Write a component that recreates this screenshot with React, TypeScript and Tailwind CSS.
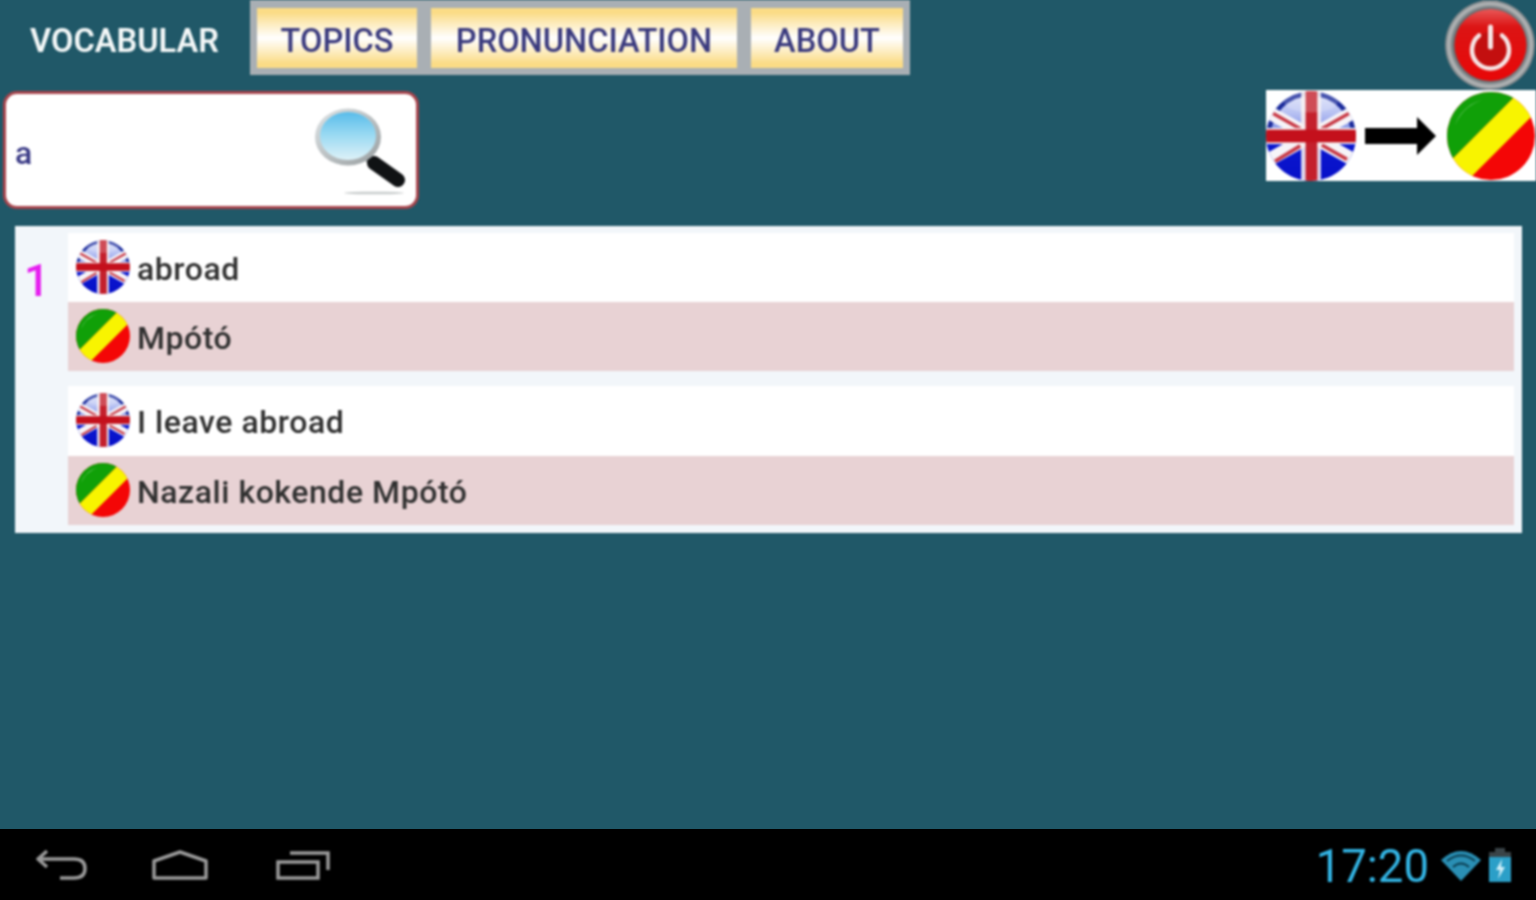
import React from "react";

function UkFlag({ size, id }: { size: number; id: string }) {
  return (
    <svg width={size} height={size} viewBox="0 0 100 100" className="block shrink-0">
      <defs>
        <clipPath id={id + "c"}>
          <circle cx="50" cy="50" r="50" />
        </clipPath>
        <linearGradient id={id + "b"} x1="0" y1="0" x2="0" y2="1">
          <stop offset="0" stopColor="#dfe4fa" />
          <stop offset="0.25" stopColor="#b6c0f2" />
          <stop offset="0.45" stopColor="#7f90e6" />
          <stop offset="0.53" stopColor="#0a18d0" />
          <stop offset="1" stopColor="#0810c8" />
        </linearGradient>
      </defs>
      <g clipPath={`url(#${id}c)`}>
        <rect width="100" height="100" fill={`url(#${id}b)`} />
        <circle cx="50" cy="50" r="47" fill="none" stroke="#1a2a9a" strokeWidth="5" strokeDasharray="148 148" strokeDashoffset="-148" />
        <path d="M0 22 L100 78 M100 22 L0 78" stroke="#f6f4f8" strokeWidth="15" />
        <path d="M8 25 L38 42 M92 25 L62 42 M10 78 L38 61 M90 76 L62 60" stroke="#c83844" strokeWidth="4" />
        <rect x="39" width="22" height="100" fill="#f6eef0" opacity="0.9" />
        <rect y="41" width="100" height="18" fill="#f6eef0" />
        <rect x="44" width="13" height="100" fill="#c4202c" />
        <rect y="43" width="100" height="14" fill="#c4101c" />
        <ellipse cx="50" cy="12" rx="30" ry="12" fill="#ffffff" opacity="0.2" />
      </g>
    </svg>
  );
}

function CongoFlag({ size, id }: { size: number; id: string }) {
  return (
    <svg width={size} height={size} viewBox="0 0 100 100" className="block shrink-0">
      <defs>
        <clipPath id={id + "c"}>
          <circle cx="50" cy="50" r="50" />
        </clipPath>
      </defs>
      <g clipPath={`url(#${id}c)`}>
        <rect width="100" height="100" fill="#f40606" />
        <path d="M0 0 H82 L0 82 Z" fill="#10a008" />
        <path d="M82 0 H100 V24 L24 100 H0 V82 Z" fill="#f8f400" />
        <path d="M9 38 A44 44 0 0 1 40 9 A50 50 0 0 0 9 38 Z" fill="#ffffff" opacity="0.55" />
      </g>
    </svg>
  );
}

function PowerButton() {
  return (
    <svg width="92" height="92" viewBox="0 0 92 92" className="block">
      <defs>
        <radialGradient id="ring" cx="0.5" cy="0.5" r="0.5">
          <stop offset="0.8" stopColor="#5f686c" />
          <stop offset="0.92" stopColor="#b8babb" />
          <stop offset="1" stopColor="#70797d" />
        </radialGradient>
        <linearGradient id="red" x1="0" y1="0" x2="0" y2="1">
          <stop offset="0" stopColor="#e85858" />
          <stop offset="0.25" stopColor="#dc1414" />
          <stop offset="1" stopColor="#e80808" />
        </linearGradient>
      </defs>
      <rect x="38" y="0" width="5" height="4" fill="#8a8f92" />
      <rect x="49" y="0" width="5" height="4" fill="#8a8f92" />
      <circle cx="46" cy="45" r="45" fill="url(#ring)" />
      <circle cx="46.5" cy="45" r="36" fill="url(#red)" />
      <circle cx="46.5" cy="50" r="18" fill="#b81010" opacity="0.75" />
      <path d="M35 35.5 A18.5 18.5 0 1 0 58 35.5" fill="none" stroke="#f6e4e4" strokeWidth="4.5" strokeLinecap="round" />
      <path d="M46.5 27 V47" stroke="#f6e4e4" strokeWidth="5" strokeLinecap="round" />
    </svg>
  );
}

function Magnifier() {
  return (
    <svg width="96" height="100" viewBox="0 0 96 100" className="block">
      <defs>
        <linearGradient id="lens" x1="0" y1="0" x2="0" y2="1">
          <stop offset="0" stopColor="#58bcea" />
          <stop offset="0.45" stopColor="#96d8f2" />
          <stop offset="1" stopColor="#def2f8" />
        </linearGradient>
        <linearGradient id="rim" x1="0" y1="0" x2="1" y2="1">
          <stop offset="0" stopColor="#dfe4e6" />
          <stop offset="1" stopColor="#989ea0" />
        </linearGradient>
      </defs>
      <ellipse cx="64" cy="93" rx="30" ry="1.3" fill="#c8cccc" />
      <path d="M54 56 L64 64" stroke="#8a8f92" strokeWidth="6" />
      <path d="M64 63 L88 80" stroke="#101214" strokeWidth="14" strokeLinecap="round" />
      <ellipse cx="38" cy="37" rx="33" ry="28.5" fill="url(#rim)" />
      <ellipse cx="38" cy="36" rx="28" ry="24" fill="url(#lens)" />
    </svg>
  );
}

function Row({ kind, text, id, h }: { kind: "en" | "ln"; text: string; id: string; h: string }) {
  const pink = kind === "ln";
  return (
    <div className={`flex items-center pl-2 ${h} ${pink ? "bg-[#e8d2d4]" : "bg-white"}`}>
      <div className="mb-[2px]">
        {pink ? <CongoFlag size={54} id={id} /> : <UkFlag size={54} id={id} />}
      </div>
      <span className="ml-[7px] mt-[2px] text-[32px] font-medium leading-none tracking-[0.55px] text-[#303030]">{text}</span>
    </div>
  );
}

export default function App() {
  const tabs = [
    { t: "TOPICS", w: "w-[160px]" },
    { t: "PRONUNCIATION", w: "w-[306px]" },
    { t: "ABOUT", w: "w-[152px]" },
  ];
  return (
    <div className="flex h-[900px] w-[1536px] flex-col overflow-hidden bg-[#205868] font-['Roboto',sans-serif]">
      <main className="flex-1 blur-[0.8px]">
        <div className="flex justify-between">
          <div>
            <div className="flex">
              <div className="flex h-[75px] w-[250px] items-center pl-[30px] pt-[7px] text-[32.6px] font-semibold text-[#f4f8f8]">VOCABULAR</div>
              <div className="flex h-[75px] gap-[14px] bg-[#a9afb4] px-[7px] pb-[7px] pt-[8px]">
                {tabs.map((x) => (
                  <div
                    key={x.t}
                    className={`flex items-center justify-center bg-gradient-to-b from-[#fbdc86] from-[8%] via-white to-[#fbdc86] to-[92%] pt-[7px] text-[32.6px] font-medium text-[#3a3a7e] ${x.w}`}
                  >
                    {x.t}
                  </div>
                ))}
              </div>
            </div>
            <div className="ml-[3px] mt-[16px] flex h-[118px] w-[416px] items-center justify-between rounded-[14px] border-[3px] border-[#a8444c] bg-white pl-[9px] pr-[10px]">
              <span className="mt-[6px] text-[32px] font-medium leading-none text-[#3a3a86]">a</span>
              <Magnifier />
            </div>
          </div>
          <div className="flex flex-col items-end">
            <div className="h-[90px]">
              <PowerButton />
            </div>
            <div className="flex h-[91px] w-[270px] items-center bg-white">
              <UkFlag size={90} id="bigUk" />
              <svg width="72" height="40" viewBox="0 0 72 40" className="ml-[9px] mr-[10px] block shrink-0">
                <path d="M0 12 H52 V1 L71 20 L52 39 V28 H0 Z" fill="#000000" />
              </svg>
              <CongoFlag size={88} id="bigCg" />
            </div>
          </div>
        </div>
        <div className="ml-[15px] mt-[17px] flex h-[307px] w-[1507px] bg-[#f2f6fa] pb-[8px] pr-[8px] pt-[7px]">
          <div className="h-full w-[53px] pl-[9px] pt-[25px] text-[45px] font-medium leading-none text-[#e61ef0]">1</div>
          <div className="flex flex-1 flex-col">
            <Row kind="en" text="abroad" id="a" h="h-[69px]" />
            <Row kind="ln" text="Mpótó" id="b" h="h-[69px]" />
            <div className="mt-[15px]">
              <Row kind="en" text="I leave abroad" id="c" h="h-[70px]" />
              <Row kind="ln" text="Nazali kokende Mpótó" id="d" h="h-[69px]" />
            </div>
          </div>
        </div>
      </main>
      <footer className="flex h-[71px] items-center justify-between bg-black pl-[36px] pr-[24px]">
        <div className="flex items-center blur-[0.8px]">
          <svg width="52" height="32" viewBox="0 0 52 32" fill="none" stroke="#9a9a9a" strokeWidth="3.5" className="block">
            <path d="M11 2 L2 10 L11 18 M2 10 H38 Q49 10 49 19.5 Q49 29 38 29 H24" strokeLinejoin="round" />
          </svg>
          <svg width="56" height="30" viewBox="0 0 56 30" fill="none" stroke="#9a9a9a" strokeWidth="3.5" className="ml-[64px] block">
            <path d="M2 11 L28 2 L54 11 V28 H2 Z" strokeLinejoin="round" />
          </svg>
          <svg width="54" height="30" viewBox="0 0 54 30" fill="none" stroke="#9a9a9a" strokeWidth="3.5" className="ml-[68px] block">
            <rect x="2" y="12" width="40" height="16" />
            <path d="M14 3 H52 V20" />
          </svg>
        </div>
        <div className="flex items-center blur-[0.8px]">
          <span className="mt-[4px] text-[45.5px] font-normal leading-none text-[#33b5e5]">17:20</span>
          <svg width="40" height="32" viewBox="0 0 40 32" className="ml-[12px] block">
            <path d="M0 11 Q20 -7 40 11 L20 32 Z" fill="#2a8fb4" />
            <path d="M6 12 Q20 1 34 12 M12 18 Q20 11 28 18" fill="none" stroke="#0b3d50" strokeWidth="2" />
          </svg>
          <svg width="24" height="34" viewBox="0 0 24 34" className="ml-[7px] block">
            <rect x="7" y="0" width="10" height="4" fill="#3a4448" />
            <rect x="1" y="4" width="22" height="6" fill="#3a4448" />
            <rect x="1" y="9" width="22" height="25" fill="#2b9fc8" />
            <path d="M14 11 L8 22 H12 L10 31 L17 19 H13 Z" fill="#cfeef8" />
          </svg>
        </div>
      </footer>
    </div>
  );
}
